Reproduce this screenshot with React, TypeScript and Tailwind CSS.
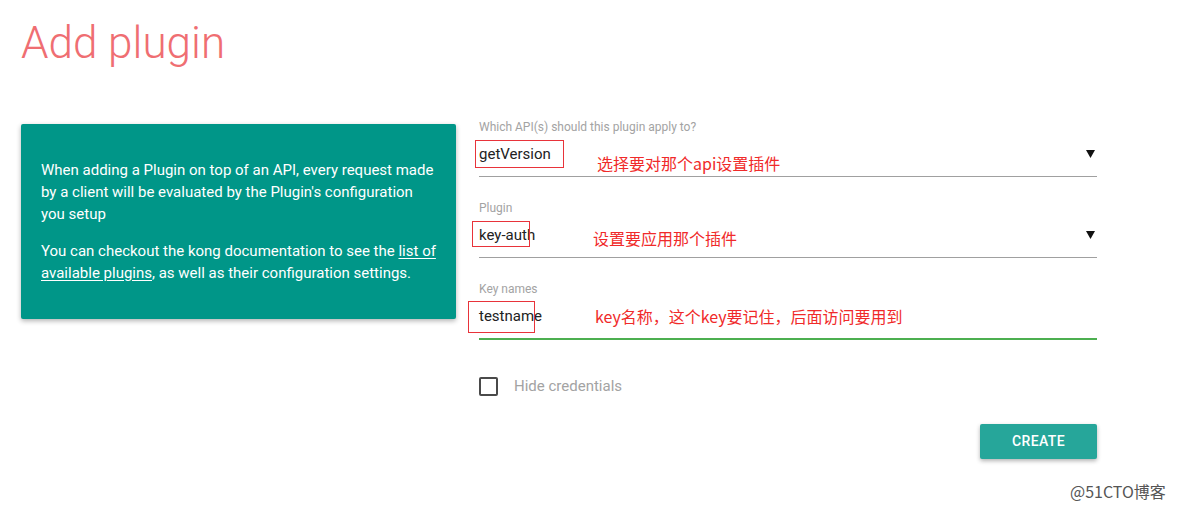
import type { ReactNode } from "react";

/* ---------- small pieces ---------- */
function Arrow() {
  return (
    <svg width="9" height="8" viewBox="0 0 9 8" className="shrink-0">
      <path d="M0 0 L9 0 L4.5 8 Z" fill="#111" />
    </svg>
  );
}

function Field({
  label,
  value,
  note,
  noteLeft,
  noteTop,
  box,
  select,
  active,
  first,
}: {
  label: string;
  value: string;
  note: ReactNode;
  noteLeft: number;
  noteTop: number;
  box: { l: number; t: number; w: number; h: number };
  select?: boolean;
  active?: boolean;
  first?: boolean;
}) {
  return (
    <div className={first ? "" : "mt-[23px]"}>
      <div className="text-[12px] leading-4 text-[#a3a3a3]">{label}</div>
      <div
        className={
          active
            ? "relative mt-[7px] flex items-center border-b-2 border-[#4caf50] pb-[10px]"
            : "relative mt-[7px] flex items-center border-b border-[#a0a0a0] pb-[10px]"
        }
      >
        <span className="text-[15px] leading-6 text-[#222]">{value}</span>
        {/* red annotation box */}
        <span
          className="absolute border border-[#e8333a]"
          style={{ left: box.l, top: box.t, width: box.w, height: box.h }}
        />
        <span
          className="absolute text-[16px] leading-5 whitespace-nowrap text-[#f02a2a]"
          style={{
            left: noteLeft,
            top: noteTop,
            fontFamily: '"Noto Sans CJK SC", sans-serif',
          }}
        >
          {note}
        </span>
        <div className="flex-1" />
        {select && (
          <div className="mr-[2px]">
            <Arrow />
          </div>
        )}
      </div>
    </div>
  );
}

export default function App() {
  return (
    <div
      className="relative h-[510px] w-[1178px] overflow-hidden bg-white"
      style={{ fontFamily: "Roboto, 'Noto Sans CJK SC', sans-serif" }}
    >
      <h1 className="h-[65px] pt-[21px] pl-[21px] text-[44px] leading-none font-light text-[#ef6e72]">
        Add plugin
      </h1>

      <div className="mt-[54px] flex items-start">
        {/* info card */}
        <div className="mt-[5px] ml-[21px] flex h-[195px] w-[435px] flex-col justify-center rounded-[2px] bg-[#009688] px-5 text-[15px] leading-[22px] text-white shadow-[0_2px_5px_rgba(0,0,0,0.3)]">
          <p className="mb-[15px]">
            When adding a Plugin on top of an API, every request made by a
            client will be evaluated by the Plugin's configuration you setup
          </p>
          <p>
            You can checkout the kong documentation to see the{" "}
            <span className="underline underline-offset-2">
              list of available plugins
            </span>
            , as well as their configuration settings.
          </p>
        </div>

        {/* form */}
        <div className="ml-[23px] w-[618px]">
          <Field
            first
            select
            label="Which API(s) should this plugin apply to?"
            value="getVersion"
            box={{ l: -4, t: -2, w: 89, h: 28 }}
            note="选择要对那个api设置插件"
            noteLeft={118}
            noteTop={11}
          />
          <Field
            select
            label="Plugin"
            value="key-auth"
            box={{ l: -7, t: -2, w: 58, h: 26 }}
            note="设置要应用那个插件"
            noteLeft={114}
            noteTop={5}
          />
          <Field
            active
            label="Key names"
            value="testname"
            box={{ l: -11, t: -3, w: 67, h: 32 }}
            note="key名称，这个key要记住，后面访问要用到"
            noteLeft={116}
            noteTop={2}
          />

          <div className="mt-[35px] flex items-center">
            <span className="h-[19px] w-[19px] rounded-[2px] border-2 border-[#4a4a4a]" />
            <span className="ml-[16px] text-[15px] text-[#a3a3a3]">
              Hide credentials
            </span>
          </div>

          <div className="mt-[26px] flex justify-end">
            <button className="h-[35px] w-[117px] rounded-[2px] bg-[#26a69a] text-[14px] font-medium tracking-wide text-white shadow-[0_2px_4px_rgba(0,0,0,0.3)]">
              CREATE
            </button>
          </div>
        </div>
      </div>

      {/* watermark */}
      <div
        className="absolute top-[481px] left-[1070px] text-[16px] leading-5 text-[#555]"
        style={{ fontFamily: "'Noto Sans CJK SC', sans-serif" }}
      >
        @51CTO博客
      </div>
    </div>
  );
}
